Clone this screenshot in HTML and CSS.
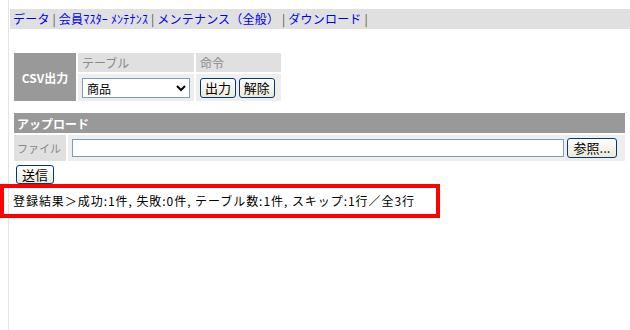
FILE: index.html
```html
<!DOCTYPE html>
<html lang="ja">
<head>
    <meta charset="UTF-8">
    <title>データ管理</title>
    <link rel="stylesheet" href="styles.css">
</head>
<body>
    <div class="page">
        <div class="nav">
            <a href="#">データ</a> |
            <a href="#">会員ﾏｽﾀｰ ﾒﾝﾃﾅﾝｽ</a> |
            <a href="#">メンテナンス（全般）</a> |
            <a href="#">ダウンロード</a> |
        </div>

        <table class="csv">
            <tr>
                <th rowspan="2" class="csv-title">CSV出力</th>
                <td class="head col-table">テーブル</td>
                <td class="head col-cmd">命令</td>
            </tr>
            <tr>
                <td class="cell">
                    <select class="table-select">
                        <option>商品</option>
                        <option>会員</option>
                    </select>
                </td>
                <td class="cell">
                    <button class="btn">出力</button>
                    <button class="btn">解除</button>
                </td>
            </tr>
        </table>

        <table class="upload">
            <tr>
                <th colspan="2" class="upload-title">アップロード</th>
            </tr>
            <tr>
                <td class="label">ファイル</td>
                <td class="cell">
                    <div class="file-row">
                        <input type="text" class="file-input">
                        <button class="btn">参照...</button>
                    </div>
                </td>
            </tr>
        </table>
        <div class="send">
            <button class="btn">送信</button>
        </div>

        <div class="result">登録結果＞成功:1件, 失敗:0件, テーブル数:1件, スキップ:1行／全3行</div>
    </div>
</body>
</html>
```

FILE: styles.css
```css
body {
    margin: 0;
    font-family: "Noto Sans CJK JP", "Liberation Sans", sans-serif;
    font-size: 12px;
    color: #000;
    background-color: #fff;
}
.page {
    margin-left: 8px;
    border-left: 1px solid #e4e4dc;
    min-height: 330px;
    padding-top: 9px;
}
.nav {
    margin-left: 1px;
    background-color: #e0e0e0;
    height: 20px;
    line-height: 20px;
    padding-left: 3px;
    color: #555;
    letter-spacing: 0.2px;
}
.nav a {
    color: #0000ee;
    text-decoration: none;
}
table {
    border-collapse: separate;
    border-spacing: 0;
    margin-left: 5px;
}
.csv {
    margin-top: 24px;
}
.csv td, .csv th, .upload td, .upload th {
    padding: 0;
    border-right: 2px solid #fff;
    border-bottom: 2px solid #fff;
}
.csv-title {
    background-color: #999;
    color: #fff;
    font-weight: bold;
    width: 62px;
    font-size: 12px;
}
.head {
    background-color: #e0e0e0;
    color: #888;
    height: 19px;
    padding: 0 4px !important;
}
.col-table {
    width: 105px;
}
.col-cmd {
    width: 77px;
}
.cell {
    background-color: #eee;
    height: 27px;
    padding: 0 4px !important;
}
.table-select {
    width: 108px;
    height: 20px;
    font-family: inherit;
    font-size: 12px;
    border: 1px solid #7f9db9;
    background-color: #fff;
}
.btn {
    font-family: inherit;
    font-size: 13px;
    padding: 0 4px;
    height: 20px;
    line-height: 16px;
    border: 1px solid #003c74;
    border-radius: 3px;
    background: linear-gradient(#fff, #ece9d8);
}
.upload {
    margin-top: 10px;
    width: 613px;
}
.upload-title {
    background-color: #999;
    color: #fff;
    text-align: left;
    font-weight: bold;
    height: 20px;
    padding-left: 3px !important;
}
.label {
    background-color: #e0e0e0;
    color: #888;
    width: 46px;
    padding: 0 3px !important;
    white-space: nowrap;
    font-size: 11px;
}
.upload .cell {
    height: 26px;
}
.file-row {
    display: flex;
    align-items: center;
    gap: 3px;
}
.file-input {
    flex: 1;
    height: 16px;
    border: 1px solid #7f9db9;
    padding: 0;
}
.file-row .btn {
    width: 50px;
    margin-right: 4px;
}
.send {
    margin: 2px 0 0 7px;
}
.send .btn {
    width: 38px;
    height: 19px;
}
.result {
    margin-top: 0;
    margin-left: -9px;
    width: 423px;
    border: 4px solid #ff0000;
    padding: 6px 0 6px 9px;
    line-height: 14px;
    letter-spacing: 0.95px;
    white-space: nowrap;
}
```
